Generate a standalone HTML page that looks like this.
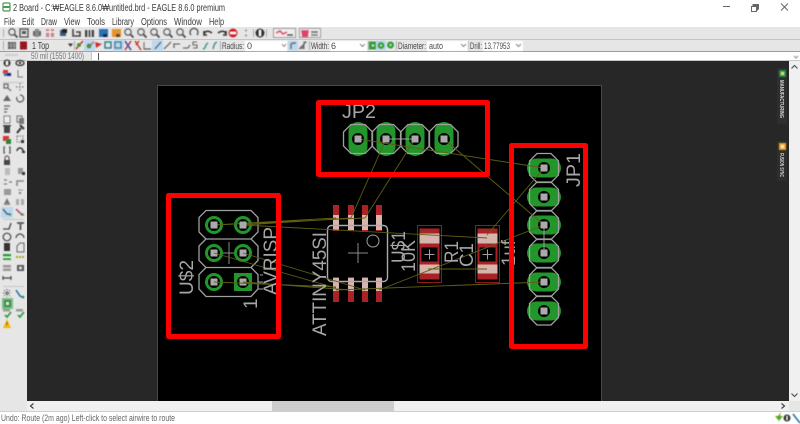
<!DOCTYPE html>
<html>
<head>
<meta charset="utf-8">
<style>
html,body{margin:0;padding:0;background:#fff;width:800px;height:424px;overflow:hidden}
svg{display:block;font-family:"Liberation Sans","Noto Sans CJK KR",sans-serif}
.m{font-size:10px;fill:#3a3a3a}
.s{font-size:9px;fill:#4a4a4a}
.t{font-size:19px;fill:#a6a6a6}
</style>
</head>
<body>
<svg width="800" height="424" viewBox="0 0 800 424" xmlns="http://www.w3.org/2000/svg">
<defs>
<filter id="b" x="-5%" y="-5%" width="110%" height="110%"><feGaussianBlur stdDeviation="0.35"/></filter>
<filter id="c" x="-5%" y="-5%" width="110%" height="110%"><feGaussianBlur stdDeviation="0.5"/></filter>
<filter id="d" x="-5%" y="-5%" width="110%" height="110%"><feGaussianBlur stdDeviation="0.3"/></filter>
<g id="pv"><rect x="-9.5" y="-17" width="19" height="34" rx="9.5" fill="#22962b"/><circle r="6" fill="#000"/><rect x="-3.5" y="-3.5" width="7" height="7" fill="#ababab"/></g>
<g id="ph"><rect x="-17" y="-9.5" width="34" height="19" rx="9.5" fill="#22962b"/><circle r="6" fill="#000"/><rect x="-3.5" y="-3.5" width="7" height="7" fill="#ababab"/></g>
<g id="pr"><circle r="9" fill="#22962b"/><circle r="6" fill="#000"/><rect x="-3.5" y="-3.5" width="7" height="7" fill="#ababab"/></g>
<polygon id="ov" points="-7,-14.5 7,-14.5 14.5,-7 14.5,7 7,14.5 -7,14.5 -14.5,7 -14.5,-7" fill="none" stroke="#a0a0a0" stroke-width="1.3"/>
<g id="smd">
<rect x="0" y="0" width="24" height="57" fill="#000" stroke="#8a1f1f" stroke-width="1"/>
<rect x="2" y="3" width="20" height="51" fill="#a92327"/>
<rect x="2" y="8" width="20" height="10" fill="#d8b4ae"/>
<rect x="2" y="39" width="20" height="9" fill="#d8b4ae"/>
<rect x="4" y="22" width="16" height="14" fill="#000"/>
<path d="M7 29H17M12 24V34" stroke="#a0a0a0" stroke-width="1"/>
</g>
<g id="ic"><rect x="-4" y="-4" width="8" height="8" fill="none" stroke="#555" stroke-width="1.4"/><rect x="-2" y="-2" width="4" height="3" fill="#555"/></g>
<g id="z"><circle cx="-1" cy="-1" r="3.2" fill="none" stroke="#666" stroke-width="1.3"/><path d="M1.5 1.5L4.5 4.5" stroke="#444" stroke-width="1.7"/></g>
</defs>

<!-- chrome backgrounds -->
<rect width="800" height="27" fill="#fff"/>
<rect y="27" width="800" height="385" fill="#e6e6e6"/>
<rect y="39" width="800" height="1" fill="#c4c4c4"/>
<rect y="51" width="800" height="1" fill="#9c9c9c"/>
<rect x="27" y="52" width="773" height="9" fill="#fff"/>
<rect x="27" y="52" width="64" height="9" fill="#e8e8e8"/>
<rect x="91" y="52" width="1" height="9" fill="#c8c8c8"/>
<rect x="98" y="53" width="1" height="7" fill="#555"/>
<rect y="60" width="800" height="1" fill="#c8c8c8"/>

<!-- canvas -->
<rect x="27" y="61" width="762" height="340" fill="#272727"/>
<rect x="157.500" y="85.500" width="444" height="316" fill="#000" stroke="#5e4420" stroke-width="1"/>
<rect x="777" y="68" width="10" height="56" fill="#2e2e2e"/>
<rect x="777" y="141" width="10" height="40" fill="#2e2e2e"/>

<!-- scrollbars -->
<rect x="789" y="61" width="11" height="340" fill="#f0f0f0"/>
<path d="M791.500 68.500L794.500 65.500L797.500 68.500M791.500 393.500L794.500 396.500L797.500 393.500" fill="none" stroke="#555" stroke-width="1.2"/>
<rect x="27" y="401" width="762" height="10" fill="#f0f0f0"/>
<rect x="272" y="401" width="122" height="10" fill="#cdcdcd"/>
<path d="M33.500 403.500L30.500 406L33.500 408.500M781.500 403.500L784.500 406L781.500 408.500" fill="none" stroke="#444" stroke-width="1.2"/>
<rect y="411" width="800" height="1" fill="#cfcfcf"/>

<!-- title bar -->
<rect x="3" y="3" width="7" height="8" rx="1" fill="#fff" stroke="#4c9a56" stroke-width="1.2"/>
<rect x="3" y="6" width="7" height="2" fill="#4c9a56"/>
<path d="M723 6.500H730" stroke="#666" stroke-width="1"/>
<path d="M752.500 5.500H757.500V10.500M752.500 4.500H758.500V9.500" fill="none" stroke="#666"/><rect x="751.500" y="6.500" width="5" height="5" fill="none" stroke="#666"/>
<path d="M781 3.500L788 10.500M788 3.500L781 10.500" stroke="#666" stroke-width="1"/>

<g filter="url(#d)">
<text x="13" y="11" class="m" textLength="212" lengthAdjust="spacingAndGlyphs">2 Board - C:₩EAGLE 8.6.0₩untitled.brd - EAGLE 8.6.0 premium</text>
<text x="4" y="25" class="m" textLength="11" lengthAdjust="spacingAndGlyphs">File</text>
<text x="22" y="25" class="m" textLength="12" lengthAdjust="spacingAndGlyphs">Edit</text>
<text x="41" y="25" class="m" textLength="16" lengthAdjust="spacingAndGlyphs">Draw</text>
<text x="64" y="25" class="m" textLength="16" lengthAdjust="spacingAndGlyphs">View</text>
<text x="87" y="25" class="m" textLength="18" lengthAdjust="spacingAndGlyphs">Tools</text>
<text x="112" y="25" class="m" textLength="22" lengthAdjust="spacingAndGlyphs">Library</text>
<text x="141" y="25" class="m" textLength="26" lengthAdjust="spacingAndGlyphs">Options</text>
<text x="174" y="25" class="m" textLength="28" lengthAdjust="spacingAndGlyphs">Window</text>
<text x="209" y="25" class="m" textLength="15" lengthAdjust="spacingAndGlyphs">Help</text>
</g>

<g filter="url(#c)">
<!-- toolbar 1 -->
<rect x="3" y="29" width="1" height="8" fill="#aaa"/>
<use href="#z" x="13" y="33"/>
<use href="#ic" x="24" y="33"/>
<rect x="33" y="31" width="8" height="5" fill="#666"/><rect x="35" y="29" width="4" height="8" fill="#888"/>
<rect x="46" y="29" width="8" height="8" fill="#c98a8f"/><path d="M46 32H54M50 29V37" stroke="#fff"/>
<rect x="60" y="30" width="6" height="6" fill="#3a5a78"/><rect x="62" y="29" width="5" height="4" fill="#222"/>
<path d="M73 29V36H80V32H76" fill="none" stroke="#444" stroke-width="1.6"/>
<rect x="85" y="30" width="9" height="7" fill="#444"/><path d="M88 30V37M91 30V37" stroke="#ddd"/>
<rect x="99" y="29" width="9" height="8" fill="#2f6fb5"/><rect x="103" y="34" width="4" height="3" fill="#123"/>
<rect x="112" y="29" width="9" height="8" fill="#e8922c"/><rect x="116" y="34" width="4" height="3" fill="#543"/>
<use href="#z" x="129" y="33"/><use href="#z" x="142" y="33"/><use href="#z" x="155" y="33"/><use href="#z" x="168" y="33"/><use href="#z" x="181" y="33"/>
<path d="M191 35A4 4 0 1 1 197 35" fill="none" stroke="#555" stroke-width="1.4"/>
<path d="M204 35C204 31 208 30 212 33M204 31L204 35L207 35" fill="none" stroke="#333" stroke-width="1.6"/>
<path d="M226 35C226 31 222 30 218 33M226 31L226 35L223 35" fill="none" stroke="#333" stroke-width="1.6"/>
<circle cx="233" cy="33" r="4.5" fill="#d3222a"/><rect x="230" y="32" width="6" height="2" fill="#fff"/>
<circle cx="246" cy="30.500" r="1" fill="#888"/><circle cx="246" cy="35.500" r="1" fill="#888"/>
<rect x="253" y="29" width="1" height="8" fill="#aaa"/>
<circle cx="260" cy="33" r="4.500" fill="#333"/><rect x="259" y="30" width="2" height="6" fill="#fff"/>
<rect x="266" y="29" width="1" height="8" fill="#aaa"/>
<rect x="273.500" y="28.500" width="22" height="9" fill="#eee" stroke="#999"/>
<path d="M276 33L280 31L283 34L287 32" fill="none" stroke="#e2426a" stroke-width="1.8"/><rect x="287" y="34" width="6" height="2" fill="#666"/>
<rect x="299.500" y="28.500" width="21" height="9" fill="#eee" stroke="#999"/>
<path d="M301 30H309L308 37H302Z" fill="#e2426a"/><rect x="311" y="31" width="7" height="2" fill="#777"/><rect x="311" y="34" width="7" height="2" fill="#888"/>

<!-- toolbar 2 -->
<rect x="3" y="41" width="1" height="9" fill="#aaa"/>
<rect x="8" y="42" width="8" height="7" fill="#555"/><path d="M8 44.500H16M8 46.500H16M11 42V49M14 42V49" stroke="#ccc" stroke-width=".6"/>
<rect x="20" y="41.500" width="7" height="8" fill="#96171f"/>
<path d="M69 44L72 44L70.500 46Z" fill="#333" stroke="#333"/>
<rect x="74" y="41" width="1" height="9" fill="#aaa"/>
<path d="M76 49L83 41" stroke="#d22" stroke-width="1.6"/><circle cx="79" cy="45" r="2" fill="#3a9a3a"/>
<rect x="84" y="40" width="11" height="11" fill="#bcd8ef"/><circle cx="89" cy="46" r="2.5" fill="#3a9a3a"/><path d="M89 46L94 42" stroke="#c33" stroke-width="1.2"/>
<path d="M95 42L102 44L96 48Z" fill="#c33"/>
<rect x="105" y="42" width="6" height="6" fill="none" stroke="#2b7a8a" stroke-width="1.4"/>
<rect x="113" y="40" width="11" height="11" fill="#bcd8ef"/><rect x="115" y="42" width="6" height="6" fill="none" stroke="#2b7a8a" stroke-width="1.4"/>
<path d="M125 41L131 50M131 41L125 50" stroke="#b8264a" stroke-width="1.4"/><path d="M125 41L131 50" stroke="#2a52a5" stroke-width="1.4"/>
<path d="M135 41L141 50M139 41L136 45" stroke="#c33" stroke-width="1.4"/>
<path d="M144 42V49H151" fill="none" stroke="#777" stroke-width="1.2"/><path d="M144 49H151" stroke="#555"/>
<rect x="152" y="40" width="11" height="11" fill="#bcd8ef"/><path d="M155 49L161 42" stroke="#345" stroke-width="1.3"/>
<path d="M164 49L171 42" stroke="#555" stroke-width="1.1"/>
<path d="M174 48V44H180" fill="none" stroke="#555" stroke-width="1.1"/>
<path d="M183 48H188L190 45" fill="none" stroke="#555" stroke-width="1.1"/>
<path d="M197 42H193V45H197V48H193" fill="none" stroke="#666" stroke-width="1.1"/>
<path d="M203 49C206 49 205 44 208 43" fill="none" stroke="#2a8a8a" stroke-width="1.3"/>
<path d="M213 49C214 46 214 43 217 42" fill="none" stroke="#2a8a8a" stroke-width="1.3"/>
<rect x="220" y="41" width="1" height="9" fill="#aaa"/>
<rect x="245" y="41" width="42" height="10" fill="#fff"/>
<path d="M282 44L284 46.500L286 44" fill="none" stroke="#666"/>
<rect x="288" y="40.500" width="10" height="10" fill="#bcd8ef"/><path d="M291 49V45C291 43 292 43 296 43" fill="none" stroke="#555" stroke-width="1.4"/>
<path d="M299 49L306 42H304V49" fill="#777" stroke="#666"/>
<rect x="309" y="41" width="1" height="9" fill="#aaa"/>
<rect x="330" y="41" width="37" height="10" fill="#fff"/>
<path d="M360 44L362.500 46.500L365 44" fill="none" stroke="#666"/>
<rect x="368" y="41" width="1" height="9" fill="#aaa"/>
<rect x="369" y="41.500" width="8" height="8" fill="#32a036"/><rect x="372" y="44.500" width="2" height="2" fill="#cfe9cf"/>
<rect x="376" y="40.500" width="10" height="10" fill="#bcd8ef"/><circle cx="381" cy="45.500" r="3.500" fill="#32a036"/><circle cx="381" cy="45.500" r="1" fill="#cfe9cf"/>
<circle cx="390.500" cy="45" r="3.500" fill="#32a036"/><circle cx="390.500" cy="45" r="1" fill="#cfe9cf"/>
<rect x="396" y="41" width="1" height="9" fill="#aaa"/>
<rect x="427" y="41" width="41" height="10" fill="#fff"/>
<path d="M461 44L463.500 46.500L466 44" fill="none" stroke="#666"/>
<rect x="468" y="41" width="1" height="9" fill="#aaa"/>
<rect x="483" y="41" width="40" height="10" fill="#fff"/>
<path d="M516 44L518.500 46.500L521 44" fill="none" stroke="#666"/>
<path d="M794 56L796 58L798 56" fill="none" stroke="#888"/>

<!-- left panel -->
<rect x="5" y="54" width="13" height="2" fill="#cfcfcf"/>
<circle cx="7" cy="63" r="3.500" fill="#333"/><rect x="6" y="61" width="2" height="4" fill="#fff"/>
<ellipse cx="20" cy="63" rx="4" ry="2.500" fill="none" stroke="#333" stroke-width="1.3"/><circle cx="20" cy="63" r="1.200" fill="#333"/>
<rect x="3" y="70" width="5" height="4" fill="#d33"/><rect x="7" y="73" width="4" height="3" fill="#227"/><rect x="4" y="73" width="3" height="3" fill="#27a"/>
<path d="M18 70V77H23" fill="none" stroke="#777"/>
<rect x="3" y="82" width="21" height="1" fill="#c4c4c4"/>
<path d="M4 84H8V88H4ZM8 88L11 91" fill="none" stroke="#666" stroke-width="1.200"/>
<path d="M20 83V91M16 87H24" stroke="#777" stroke-dasharray="1.500 1.500" stroke-width="1.200"/>
<path d="M3 101L7 95L11 101ZM7 95V101" fill="#666"/>
<path d="M17 97A3.500 3.500 0 1 0 20 95" fill="none" stroke="#555" stroke-width="1.200"/>
<path d="M4 106H10M4 109H8M4 112H7" stroke="#666" stroke-width="1.300"/>
<rect x="4" y="116" width="6" height="7" fill="#eee" stroke="#777"/>
<rect x="17" y="116" width="5" height="6" fill="#ddd" stroke="#666"/><rect x="19" y="118" width="5" height="6" fill="#777"/>
<rect x="4" y="126" width="6" height="7" fill="#444"/><rect x="3" y="125" width="8" height="1.500" fill="#444"/>
<path d="M17 133L21 128M20 125L24 129" stroke="#333" stroke-width="2"/>
<rect x="3" y="136" width="6" height="5" fill="#d33"/><rect x="6" y="139" width="5" height="5" fill="#283"/>
<rect x="17" y="136" width="6" height="6" fill="none" stroke="#777" stroke-dasharray="1.500 1"/><rect x="21" y="140" width="3" height="3" fill="#333"/>
<path d="M5 147H4V153H5M9 147H10V153H9" fill="none" stroke="#555" stroke-width="1.300"/>
<path d="M17 151A3 3 0 0 1 23 151" fill="none" stroke="#333" stroke-width="1.500"/><rect x="22" y="151" width="3" height="2" fill="#333"/>
<rect x="4" y="160" width="6" height="5" fill="#444"/><path d="M5 160V158A2 2 0 0 1 9 158V160" fill="none" stroke="#444"/>
<rect x="5" y="168" width="5" height="7" fill="#bbb"/><rect x="18" y="168" width="5" height="6" fill="#999"/><rect x="22" y="172" width="3" height="3" fill="#333"/>
<path d="M4 180H7M4 184H7M9 182H12" stroke="#777" stroke-width="1.200"/>
<path d="M17 186V181H24" fill="none" stroke="#888" stroke-width="1.600"/>
<rect x="4" y="189" width="7" height="6" fill="#999"/><path d="M18 190H23" stroke="#999"/><rect x="19" y="192" width="2" height="2" fill="#777"/>
<path d="M4 204L7 198L10 204Z" fill="#777"/><rect x="4" y="203" width="6" height="2" fill="#888"/>
<rect x="16" y="199" width="3" height="6" fill="#aaa"/><rect x="21" y="199" width="3" height="6" fill="#aaa"/>
<rect x="1" y="207" width="12" height="11" fill="#bcd8ef"/>
<path d="M3 209L7 214H10" fill="none" stroke="#256" stroke-width="1.500"/><circle cx="10" cy="214.500" r="1.300" fill="#2a9a3c"/>
<path d="M16 209L20 213L24 215" fill="none" stroke="#c33c60" stroke-width="1.500"/><circle cx="22" cy="214.500" r="1.300" fill="#2a9a3c"/>
<rect x="3" y="219" width="21" height="1" fill="#c4c4c4"/>
<path d="M3 229H9L11 223" fill="none" stroke="#444" stroke-width="1.300"/>
<path d="M17 223H24M20.500 223V230" stroke="#555" stroke-width="1.800"/>
<circle cx="7" cy="237" r="3.800" fill="none" stroke="#444" stroke-width="1.200"/>
<path d="M16 238A4 4 0 0 1 24 238" fill="none" stroke="#444" stroke-width="1.200"/>
<rect x="4" y="243" width="6" height="8" fill="#333"/>
<path d="M17 252V246L20 243H24V252Z" fill="none" stroke="#666"/>
<rect x="3" y="254" width="8" height="6" fill="#2f9a40"/><rect x="3" y="256.500" width="8" height="1.500" fill="#cfc"/>
<path d="M16 257H24" stroke="#a7a722" stroke-width="2" stroke-dasharray="2 1"/>
<rect x="3" y="265" width="8" height="6" fill="#999"/><rect x="3" y="267.500" width="8" height="1" fill="#ddd"/>
<rect x="17" y="265" width="7" height="6" fill="#555"/><circle cx="20.500" cy="268" r="1.500" fill="#ddd"/>
<path d="M3 278H11M3 276V280M11 276V280" stroke="#444" stroke-width="1.200"/>
<rect x="3" y="286" width="21" height="1" fill="#c4c4c4"/>
<path d="M4 290L10 296M10 290L4 296M7 289V297M3 293H11" stroke="#666" stroke-dasharray="1.500 1"/>
<path d="M16 290L20 296L24 298" fill="none" stroke="#1f6fa5" stroke-width="1.500"/><circle cx="23" cy="297" r="1.300" fill="#2a9a3c"/>
<rect x="2" y="298" width="11" height="11" fill="#7dbb86"/><rect x="4" y="300" width="7" height="7" fill="#2e8a3a"/><rect x="6" y="302" width="3" height="3" fill="#cfe9cf"/>
<rect x="3" y="309" width="7" height="2.500" fill="#999"/><path d="M5 315L7 317L11 312" fill="none" stroke="#2a9a3c" stroke-width="1.600"/>
<rect x="16" y="309" width="7" height="2.500" fill="#999"/><path d="M18 315L20 317L24 312" fill="none" stroke="#2a9a3c" stroke-width="1.600"/>
<path d="M7 319L11 328H3Z" fill="#f2b705"/><rect x="6.500" y="322" width="1" height="3" fill="#333"/>

<!-- right panel -->
<rect x="779" y="70" width="7" height="7" fill="#1c8f4f"/><rect x="781" y="72" width="3" height="3" fill="#d9e36a"/>
<rect x="779" y="143" width="7" height="7" fill="#f0a020"/><rect x="781" y="145" width="3" height="3" fill="#fff0c0"/>
<!-- status icons -->
<path d="M775 416H783L779 421ZM778 416L781 412L780 416Z" fill="#5aa822"/>
<circle cx="787" cy="418" r="3.500" fill="#333"/><rect x="786.500" y="416" width="1" height="4" fill="#fff"/>
<path d="M793 414L796 418L800 423" fill="none" stroke="#1f6fa5" stroke-width="1.500"/>
</g>

<g filter="url(#d)">
<text x="32" y="49" class="m" textLength="17" lengthAdjust="spacingAndGlyphs">1 Top</text>
<text x="222" y="49" class="s" textLength="22" lengthAdjust="spacingAndGlyphs">Radius:</text>
<text x="247" y="49" class="s">0</text>
<text x="311" y="49" class="s" textLength="18" lengthAdjust="spacingAndGlyphs">Width:</text>
<text x="331" y="49" class="s">6</text>
<text x="398" y="49" class="s" textLength="28" lengthAdjust="spacingAndGlyphs">Diameter:</text>
<text x="429" y="49" class="s" textLength="14" lengthAdjust="spacingAndGlyphs">auto</text>
<text x="470" y="49" class="s" textLength="12" lengthAdjust="spacingAndGlyphs">Drill:</text>
<text x="484" y="49" class="s" textLength="26" lengthAdjust="spacingAndGlyphs">13.77953</text>
<text x="31" y="59" class="s" textLength="53" lengthAdjust="spacingAndGlyphs" style="fill:#777">50 mil (1550 1400)</text>
<text x="1" y="421" class="s" textLength="174" lengthAdjust="spacingAndGlyphs" style="fill:#666">Undo: Route (2m ago) Left-click to select airwire to route</text>
<text transform="translate(780,80) rotate(90)" style="font-size:5.500px;fill:#d5d5d5;font-weight:bold" textLength="38" lengthAdjust="spacingAndGlyphs">MANUFACTURING</text>
<text transform="translate(780,153) rotate(90)" style="font-size:5.500px;fill:#d5d5d5;font-weight:bold" textLength="24" lengthAdjust="spacingAndGlyphs">FUSION SYNC</text>
</g>

<!-- board contents -->
<g filter="url(#b)">
<use href="#pv" x="358" y="139"/><use href="#pv" x="386" y="139"/><use href="#pv" x="415" y="139"/><use href="#pv" x="444" y="139"/>
<use href="#ov" x="358" y="139"/><use href="#ov" x="386.500" y="139"/><use href="#ov" x="415" y="139"/><use href="#ov" x="443.500" y="139"/>
<path d="M386 139H415" stroke="#a0a0a0"/>
<use href="#ph" x="544" y="168"/><use href="#ph" x="544" y="197"/><use href="#ph" x="544" y="225"/><use href="#ph" x="544" y="253"/><use href="#ph" x="544" y="282"/><use href="#ph" x="544" y="311"/>
<use href="#ov" x="544" y="168"/><use href="#ov" x="544" y="196.500"/><use href="#ov" x="544" y="225"/><use href="#ov" x="544" y="253.500"/><use href="#ov" x="544" y="282"/><use href="#ov" x="544" y="310.500"/>
<path d="M544 225V253" stroke="#a0a0a0"/>
<path d="M206 210.500H251L258 217.500V232L251 239L258 246V260.500L251 267.500L258 274.500V289L251 296.500H206L199 289V274.500L206 267.500L199 260.500V246L206 239L199 232V217.500Z" fill="none" stroke="#a0a0a0" stroke-width="1.300"/>
<path d="M206 239H251M206 267.500H251" stroke="#a0a0a0" stroke-width="1.300"/>
<path d="M229 242V264M218 253H240" stroke="#8a8a8a" stroke-width="1"/>
<use href="#pr" x="214" y="225"/><use href="#pr" x="243" y="225"/><use href="#pr" x="214" y="253"/><use href="#pr" x="243" y="253"/><use href="#pr" x="214" y="282"/>
<rect x="234" y="273" width="18" height="18" fill="#22962b"/><circle cx="243" cy="282" r="6" fill="#000"/><rect x="239.500" y="278.500" width="7" height="7" fill="#ababab"/>
<path d="M260 275H263M258 282H263M258 289H263" stroke="#a0a0a0"/>
<g fill="#a92327">
<rect x="333" y="205" width="6" height="26"/><rect x="348" y="205" width="6" height="26"/><rect x="362" y="205" width="6" height="26"/><rect x="376" y="205" width="6" height="26"/>
<rect x="333" y="277" width="6" height="25"/><rect x="348" y="277" width="6" height="25"/><rect x="362" y="277" width="6" height="25"/><rect x="376" y="277" width="6" height="25"/>
</g>
<g fill="#d8b4ae">
<rect x="333" y="215" width="6" height="15"/><rect x="348" y="215" width="6" height="15"/><rect x="362" y="215" width="6" height="15"/><rect x="376" y="215" width="6" height="15"/>
<rect x="333" y="278" width="6" height="13"/><rect x="348" y="278" width="6" height="13"/><rect x="362" y="278" width="6" height="13"/><rect x="376" y="278" width="6" height="13"/>
</g>
<rect x="327.500" y="225.500" width="60" height="56" rx="4" fill="none" stroke="#ababab" stroke-width="1.400"/>
<circle cx="373" cy="241" r="6" fill="none" stroke="#a0a0a0"/>
<path d="M348 253H368M358 243V263" stroke="#8a8a8a"/>
<use href="#smd" x="417.500" y="225.500"/>
<use href="#smd" x="475.500" y="225.500"/>
<g stroke="#5e5e14" stroke-width=".9" fill="none">
<path d="M358 139L544 168M444 139L544 225M386 139L351 218M415 139L365 218"/>
<path d="M544 168L487 235M544 225L379 290M544 282L336 290"/>
<path d="M214 225L336 218M243 225L351 218M214 225L365 218M243 225L487 238"/>
<path d="M428 269H487"/>
<path d="M214 253L336 288M243 253L365 290M214 282L336 287M243 282L350 290"/>
</g>
<g fill="#ababab">
<rect x="354.500" y="135.500" width="7" height="7"/><rect x="382.500" y="135.500" width="7" height="7"/><rect x="411.500" y="135.500" width="7" height="7"/><rect x="440.500" y="135.500" width="7" height="7"/>
<rect x="540.500" y="164.500" width="7" height="7"/><rect x="540.500" y="221.500" width="7" height="7"/><rect x="540.500" y="278.500" width="7" height="7"/>
<rect x="210.500" y="221.500" width="7" height="7"/><rect x="239.500" y="221.500" width="7" height="7"/>
</g>
</g>

<!-- board text -->
<g filter="url(#d)">
<text x="342" y="118" class="t" textLength="34" lengthAdjust="spacingAndGlyphs" style="font-size:19.500px">JP2</text>
<text transform="translate(580,187) rotate(-90)" class="t" textLength="34" lengthAdjust="spacingAndGlyphs" style="font-size:19.500px">JP1</text>
<text transform="translate(193,295) rotate(-90)" class="t" textLength="35" lengthAdjust="spacingAndGlyphs">U$2</text>
<text transform="translate(277,295) rotate(-90)" class="t" textLength="68" lengthAdjust="spacingAndGlyphs">AVRISP</text>
<text transform="translate(257,309) rotate(-90)" class="t">1</text>
<text transform="translate(326,336) rotate(-90)" class="t" textLength="104" lengthAdjust="spacingAndGlyphs">ATTINY45SI</text>
<text transform="translate(405,263) rotate(-90)" class="t" textLength="32" lengthAdjust="spacingAndGlyphs">U$1</text>
<text transform="translate(415,272) rotate(-90)" class="t" textLength="32" lengthAdjust="spacingAndGlyphs">10K</text>
<text transform="translate(458,263) rotate(-90)" class="t" textLength="22" lengthAdjust="spacingAndGlyphs">R1</text>
<text transform="translate(473,267) rotate(-90)" class="t" textLength="24" lengthAdjust="spacingAndGlyphs">C1</text>
<text transform="translate(515,266) rotate(-90)" class="t" textLength="26" lengthAdjust="spacingAndGlyphs">1uf</text>
</g>

<!-- red annotation boxes -->
<g fill="none" stroke="#fe0000" stroke-width="5" stroke-linejoin="round">
<rect x="318.500" y="102.500" width="169" height="72"/>
<rect x="168.500" y="195.500" width="110" height="141"/>
<rect x="511.500" y="145.500" width="74" height="201"/>
</g>
</svg>
</body>
</html>
